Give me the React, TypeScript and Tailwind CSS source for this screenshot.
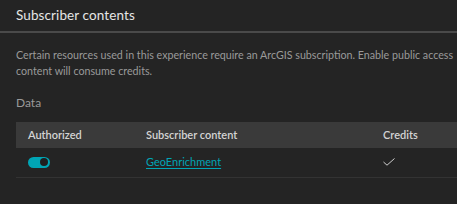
export default function App() {
  return (
    <div className="w-[457px] h-[204px] overflow-hidden bg-[#242424] text-[#e0e0e0]" style={{ fontFamily: 'Lato, "Noto Sans", sans-serif' }}>
      {/* Header */}
      <div className="h-[33px] px-4 flex items-center border-b-2 border-[#4a4a4a]">
        <h2 className="text-[13.5px] text-[#e6e6e6] leading-none tracking-[0.1px]">Subscriber contents</h2>
      </div>

      {/* Body */}
      <div className="px-4 pt-[14px]">
        <p className="text-[10.7px] leading-[16px] text-[#9a9a9a]">
          <span className="block whitespace-nowrap">
            Certain resources used in this experience require an ArcGIS subscription. Enable public access
          </span>
          <span className="block whitespace-nowrap">content will consume credits.</span>
        </p>

        <div className="mt-[16px] text-[12px] leading-[16px] text-[#9a9a9a]">Data</div>

        <table className="mt-[11px] w-[520px] text-[11px] border-collapse">
          <thead>
            <tr className="bg-[#3a3a3a] h-[26px] text-left text-[#d4d4d4]">
              <th className="w-[118px] px-3 font-semibold">Authorized</th>
              <th className="w-[237px] px-3 font-semibold">Subscriber content</th>
              <th className="px-3 font-semibold">Credits</th>
            </tr>
          </thead>
          <tbody>
            <tr className="h-[29px] border-b border-[#333333]">
              <td className="px-3">
                <div className="w-[22px] h-[11px] rounded-full bg-[#00a5b5] flex items-center justify-end pr-[2px]">
                  <div className="w-[8px] h-[8px] rounded-full bg-[#1f1f1f]" />
                </div>
              </td>
              <td className="px-3">
                <a href="#" className="text-[#00a5b5] underline underline-offset-2">GeoEnrichment</a>
              </td>
              <td className="px-3">
                <svg width="12" height="8" viewBox="0 0 12 8" fill="none" stroke="#cfcfcf" strokeWidth="1">
                  <path d="M0.5 4 L4 7.2 L11.5 0.5" />
                </svg>
              </td>
            </tr>
          </tbody>
        </table>
      </div>
    </div>
  );
}
